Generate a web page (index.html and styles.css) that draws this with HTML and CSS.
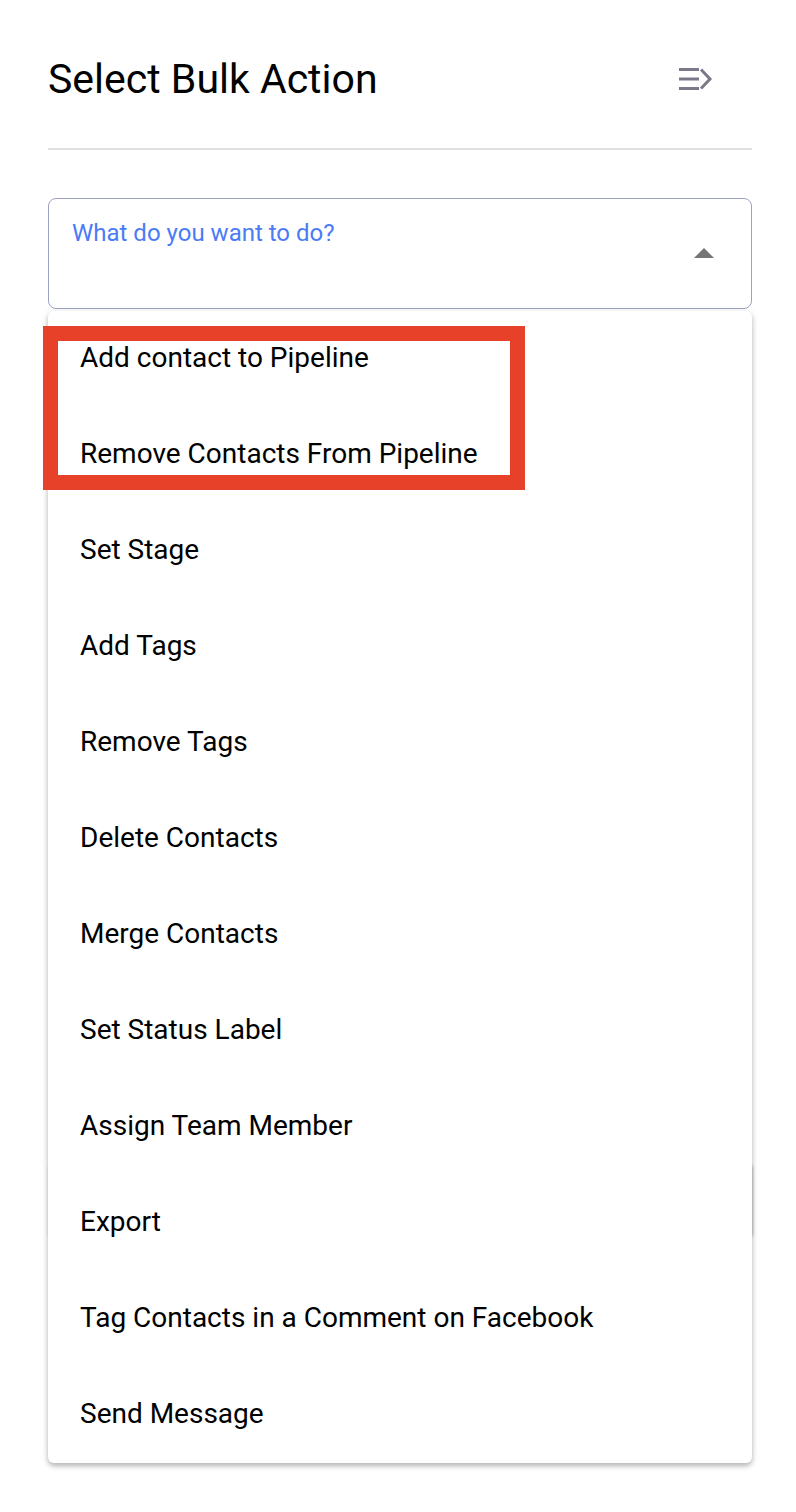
FILE: index.html
```html
<!DOCTYPE html>
<html lang="en">
<head>
    <meta charset="UTF-8">
    <meta name="viewport" content="width=device-width, initial-scale=1.0">
    <title>Select Bulk Action</title>
    <link rel="stylesheet" href="styles.css">
</head>
<body>
    <div class="panel">
        <div class="panel_header">
            <h2 class="panel_title">Select Bulk Action</h2>
            <button class="panel_toggle" type="button" aria-label="Collapse">
                <svg width="40" height="30" viewBox="0 0 40 30">
                    <path d="M3 5.5H23M3 15H23M3 24.5H23" stroke="#7b7889" stroke-width="3" fill="none"/>
                    <path d="M25 5.5L34 15L25 24.5" stroke="#7b7889" stroke-width="3" fill="none" stroke-linejoin="miter"/>
                </svg>
            </button>
        </div>

        <hr class="divider">

        <div class="select_wrap">
            <div class="select_box">
                <span class="select_label">What do you want to do?</span>
                <span class="select_arrow"></span>
            </div>

            <ul class="menu">
                <li>Add contact to Pipeline</li>
                <li>Remove Contacts From Pipeline</li>
                <li>Set Stage</li>
                <li>Add Tags</li>
                <li>Remove Tags</li>
                <li>Delete Contacts</li>
                <li>Merge Contacts</li>
                <li>Set Status Label</li>
                <li>Assign Team Member</li>
                <li>Export</li>
                <li>Tag Contacts in a Comment on Facebook</li>
                <li>Send Message</li>
            </ul>

            <!-- annotation -->
            <div class="highlight"></div>
        </div>

        <div class="field_behind"></div>
    </div>
</body>
</html>
```

FILE: styles.css
```css
body{
    margin: 0;
    min-height: 1512px;
    background: #fff;
    font-family: Roboto, "Liberation Sans", sans-serif;
    color: #000;
}

.panel{
    padding: 40px 44px 300px 48px;
}

.panel_header{
    display: flex;
    align-items: center;
    justify-content: space-between;
    height: 78px;
}

.panel_title{
    margin: 0;
    font-size: 41px;
    font-weight: 400;
}

.panel_toggle{
    background: none;
    border: none;
    padding: 0;
    margin-right: 36px;
    width: 40px;
    height: 30px;
    cursor: pointer;
}

.panel_toggle svg{
    display: block;
}

.divider{
    margin: 30px 0 0;
    border: none;
    height: 2px;
    background: #e0e0e0;
}

.select_wrap{
    position: relative;
    margin-top: 48px;
}

.select_box{
    box-sizing: border-box;
    height: 111px;
    border: 1px solid #9ea2c2;
    border-radius: 8px;
    padding: 20px 23px 0;
    position: relative;
}

.select_label{
    color: #4b7bf5;
    font-size: 24px;
}

.select_arrow{
    position: absolute;
    right: 37px;
    top: 49px;
    width: 0;
    height: 0;
    border-left: 10px solid transparent;
    border-right: 10px solid transparent;
    border-bottom: 10px solid #757575;
}

.menu{
    position: absolute;
    top: calc(100% + 2px);
    left: 0;
    right: 0;
    margin: 0;
    padding: 0;
    list-style: none;
    background: #fff;
    border-radius: 6px;
    box-shadow: 0 3px 5px rgba(0,0,0,0.25), 0 1px 10px rgba(0,0,0,0.08);
    z-index: 2;
}

.menu li{
    box-sizing: border-box;
    height: 96px;
    display: flex;
    align-items: center;
    padding: 0 0 4px 32px;
    font-size: 28px;
}

.highlight{
    position: absolute;
    left: -5px;
    top: 128px;
    width: 452px;
    height: 134px;
    border: 15px solid #e8412a;
    z-index: 3;
}

.field_behind{
    margin-top: 854px;
    height: 76px;
    border-radius: 6px;
    box-shadow: 1px 0 3px rgba(0,0,0,0.25);
}
```
